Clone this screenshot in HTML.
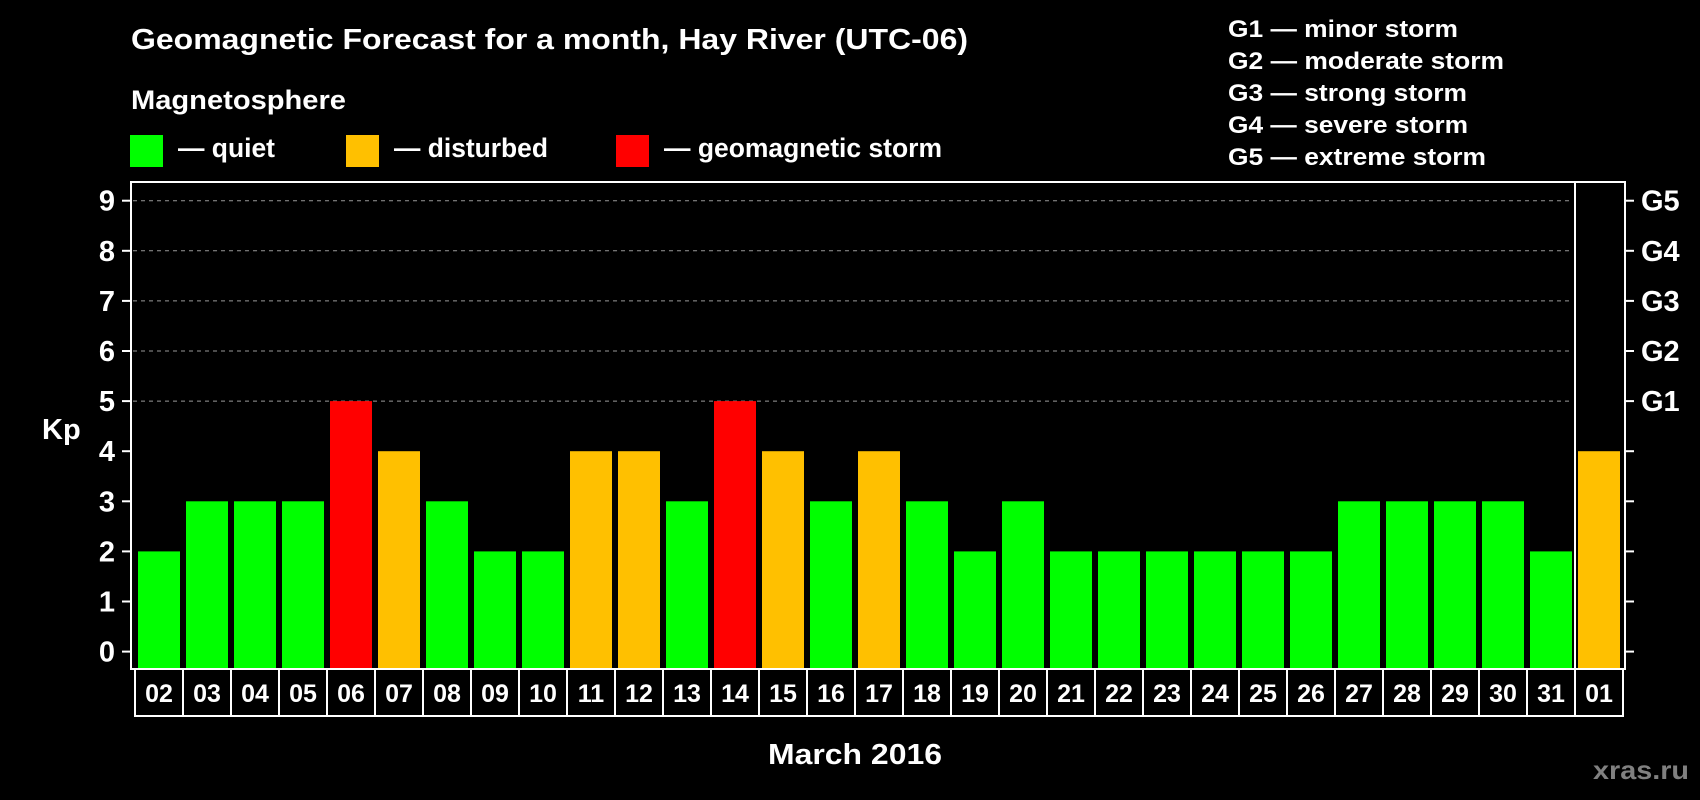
<!DOCTYPE html>
<html><head><meta charset="utf-8"><style>html,body{margin:0;padding:0;background:#000;}svg{display:block;}</style></head><body>
<svg width="1700" height="800" viewBox="0 0 1700 800" xmlns="http://www.w3.org/2000/svg" font-family="Liberation Sans, Arial, sans-serif" font-weight="bold" fill="#fff">
<rect width="1700" height="800" fill="#000"/>
<text x="131" y="49" font-size="29" textLength="837" lengthAdjust="spacingAndGlyphs">Geomagnetic Forecast for a month, Hay River (UTC-06)</text>
<text x="131" y="109" font-size="27" textLength="215" lengthAdjust="spacingAndGlyphs">Magnetosphere</text>
<rect x="130" y="135" width="33" height="32" fill="#00ff00"/>
<rect x="346" y="135" width="33" height="32" fill="#ffc000"/>
<rect x="616" y="135" width="33" height="32" fill="#ff0000"/>
<text x="178" y="157" font-size="27" textLength="97" lengthAdjust="spacingAndGlyphs">— quiet</text>
<text x="394" y="157" font-size="27" textLength="154" lengthAdjust="spacingAndGlyphs">— disturbed</text>
<text x="664" y="157" font-size="27" textLength="278" lengthAdjust="spacingAndGlyphs">— geomagnetic storm</text>
<g font-size="24">
<text x="1228" y="37" textLength="230" lengthAdjust="spacingAndGlyphs">G1 — minor storm</text>
<text x="1228" y="69" textLength="276" lengthAdjust="spacingAndGlyphs">G2 — moderate storm</text>
<text x="1228" y="101" textLength="239" lengthAdjust="spacingAndGlyphs">G3 — strong storm</text>
<text x="1228" y="133" textLength="240" lengthAdjust="spacingAndGlyphs">G4 — severe storm</text>
<text x="1228" y="165" textLength="258" lengthAdjust="spacingAndGlyphs">G5 — extreme storm</text>
</g>
<g id="grid" stroke="#999" stroke-width="1" stroke-dasharray="4,4"></g>
<g id="bars"></g>
<g stroke="#fff" stroke-width="2" fill="none">
<rect x="131" y="182" width="1494" height="487"/>
<line x1="1575" y1="182" x2="1575" y2="669"/>
</g>
<g id="ticks" stroke="#fff" stroke-width="2"></g>
<g id="labels"></g>
<text x="42" y="439" font-size="29">Kp</text>
<text x="855" y="764" font-size="29" text-anchor="middle" textLength="174" lengthAdjust="spacingAndGlyphs">March 2016</text>
<text x="1593" y="779" font-size="26" fill="#808080" textLength="96" lengthAdjust="spacingAndGlyphs">xras.ru</text>
<script>
(function(){
var ns="http://www.w3.org/2000/svg";
function el(t,a,p,txt){var e=document.createElementNS(ns,t);for(var k in a)e.setAttribute(k,a[k]);if(txt)e.textContent=txt;document.getElementById(p).appendChild(e);}
var v=[2,3,3,3,5,4,3,2,2,4,4,3,5,4,3,4,3,2,3,2,2,2,2,2,2,3,3,3,3,2,4];
var d=["02","03","04","05","06","07","08","09","10","11","12","13","14","15","16","17","18","19","20","21","22","23","24","25","26","27","28","29","30","31","01"];
var y0=651.6, st=50.1;
for(var i=0;i<31;i++){var c=v[i]>=5?"#ff0000":(v[i]==4?"#ffc000":"#00ff00");var ty=y0-st*v[i];
el("rect",{x:138+48*i,y:ty,width:42,height:669-ty,fill:c},"bars");
el("rect",{x:135+48*i,y:669,width:48,height:47,fill:"none",stroke:"#fff","stroke-width":2},"labels");
el("text",{x:159+48*i,y:702,"font-size":25,"text-anchor":"middle"},"labels",d[i]);}
for(var k=0;k<=9;k++){var y=y0-st*k;
if(k>=5)el("line",{x1:133,y1:y,x2:1573,y2:y},"grid");
el("line",{x1:122,y1:y,x2:131,y2:y},"ticks");el("line",{x1:1625,y1:y,x2:1634,y2:y},"ticks");
el("text",{x:115,y:y+10,"font-size":29,"text-anchor":"end"},"labels",""+k);
if(k>=5)el("text",{x:1641,y:y+10,"font-size":29},"labels","G"+(k-4));}
})();
</script>
</svg>
</body></html>
